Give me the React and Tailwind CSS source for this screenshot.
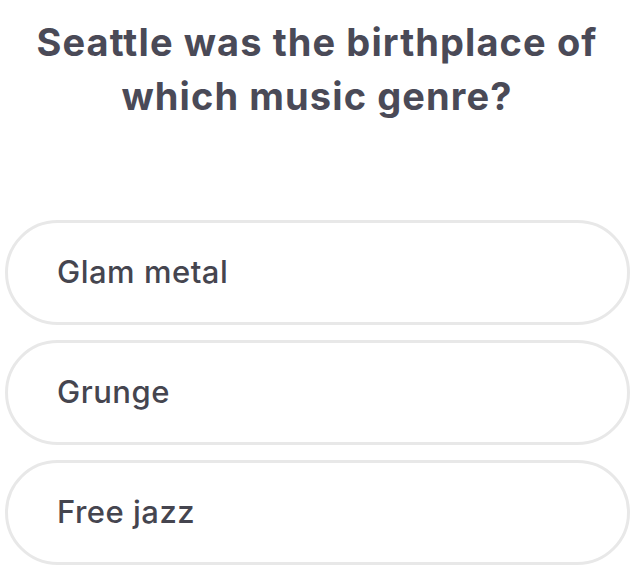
export default function App() {
  const options = ["Glam metal", "Grunge", "Free jazz"];

  return (
    <div
      className="w-[634px] h-[574px] bg-white overflow-hidden"
      style={{ fontFamily: "Inter, 'Noto Sans', sans-serif" }}
    >
      <h1 className="pt-[15px] text-center text-[38px] leading-[54px] font-bold text-[#4a4a57] tracking-[1.1px]">
        Seattle was the birthplace of
        <br />
        which music genre?
      </h1>

      <div className="mt-[97px] flex flex-col gap-[15px] pl-[5px] pr-[4px]">
        {options.map((opt) => (
          <button
            key={opt}
            className="h-[105px] w-full rounded-full border-[3px] border-[#e8e8e8] bg-white flex items-center pl-[49px] text-left"
          >
            <span className="text-[31px] font-medium text-[#45454f] tracking-[0.5px]">{opt}</span>
          </button>
        ))}
      </div>
    </div>
  );
}
